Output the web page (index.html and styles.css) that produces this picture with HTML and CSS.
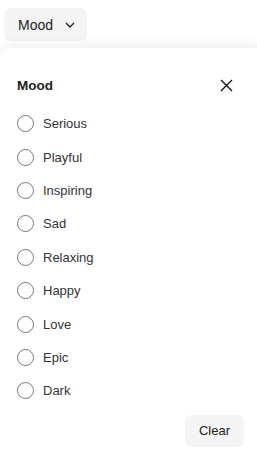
FILE: index.html
```html
<!DOCTYPE html>
<html>
<head>
<meta charset="utf-8">
<link rel="stylesheet" href="styles.css">
</head>
<body>
<div class="topbar">
  <button class="trigger">Mood
    <svg class="chev" width="10" height="6" viewBox="0 0 10 6"><path d="M1 1 L5 5 L9 1" fill="none" stroke="#222" stroke-width="1.4"/></svg>
  </button>
</div>
<div class="panel">
  <div class="header">
    <span class="title">Mood</span>
    <svg class="close" width="13" height="13" viewBox="0 0 13 13"><path d="M1 1 L12 12 M12 1 L1 12" stroke="#111" stroke-width="1.4"/></svg>
  </div>
  <ul class="list">
    <li class="row"><span class="radio"></span>Serious</li>
    <li class="row"><span class="radio"></span>Playful</li>
    <li class="row"><span class="radio"></span>Inspiring</li>
    <li class="row"><span class="radio"></span>Sad</li>
    <li class="row"><span class="radio"></span>Relaxing</li>
    <li class="row"><span class="radio"></span>Happy</li>
    <li class="row"><span class="radio"></span>Love</li>
    <li class="row"><span class="radio"></span>Epic</li>
    <li class="row"><span class="radio"></span>Dark</li>
  </ul>
  <div class="footer"><button class="clear">Clear</button></div>
</div>
</body>
</html>
```
FILE: styles.css
```css
html, body { margin: 0; padding: 0; background: #fff; }
body { font-family: "Liberation Sans", Arial, sans-serif; color: #222; overflow: hidden; height: 462px; }
.topbar { padding: 8px 0 0 4px; height: 33px; }
.trigger {
  display: flex; align-items: center; gap: 12px;
  height: 33px; width: 83px; padding: 0 0 0 14px;
  border: none; border-radius: 7px; background: #f4f4f4;
  font-family: inherit; font-size: 14px; color: #222;
}
.chev { margin-top: 1px; }
.panel {
  box-sizing: border-box;
  margin-top: 7px; background: #fff; height: 414px;
  border-radius: 9px 9px 0 0;
  box-shadow: 0 -3px 14px rgba(0,0,0,0.07);
  padding: 0 23px 0 17px; margin-right: -10px;
}
.header { display: flex; justify-content: space-between; align-items: center; padding-top: 27px; height: 20px; padding-right: 11px; }
.title { font-weight: bold; font-size: 13.5px; color: #222; }
.list { list-style: none; margin: 12px 0 0 0; padding: 0; }
.row { display: flex; align-items: center; height: 33.4px; font-size: 13px; color: #333; }
.radio { width: 15px; height: 15px; border: 1px solid #777; border-radius: 50%; margin-right: 9px; flex: none; }
.footer { display: flex; justify-content: flex-end; margin-top: 7px; }
.clear {
  height: 32px; width: 59px; border: none; border-radius: 7px; background: #f4f4f4;
  font-family: inherit; font-size: 13px; color: #222; padding: 0;
}
```
